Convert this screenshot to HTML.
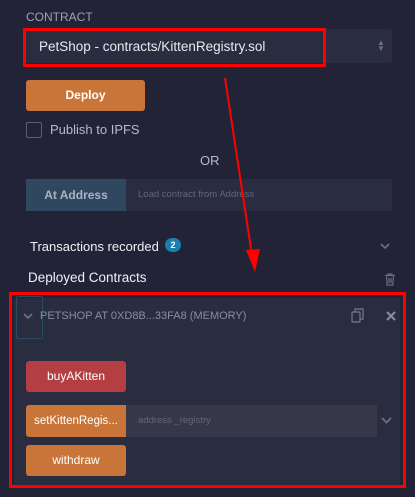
<!DOCTYPE html>
<html><head><style>
*{box-sizing:border-box;margin:0;padding:0}
body{width:415px;height:497px;background:#222336;font-family:"Liberation Sans",sans-serif;position:relative;overflow:hidden;color:#c9cbd8}
.a{position:absolute}
</style></head><body>
<div class="a" style="left:26px;top:10px;font-size:12px;color:#9fa2b4">CONTRACT</div>
<div class="a" style="left:26px;top:29px;width:366px;height:34px;background:#2a2c3f;border-radius:3px"></div>
<div class="a" style="left:39px;top:39px;font-size:13.5px;color:#e8e9f0">PetShop - contracts/KittenRegistry.sol</div>
<div class="a" style="left:377px;top:40px;font-size:8px;color:#6c6f85;line-height:6px">▲<br>▼</div>
<div class="a" style="left:23px;top:28px;width:303px;height:39px;border:3px solid #f00"></div>
<div class="a" style="left:26px;top:80px;width:119px;height:31px;background:#c97539;border-radius:3px;color:#fff;font-size:12px;font-weight:bold;text-align:center;line-height:31px">Deploy</div>
<div class="a" style="left:26px;top:122px;width:16px;height:16px;border:1px solid #5a5d73;border-radius:2px"></div>
<div class="a" style="left:50px;top:122px;font-size:13px;color:#b8bacb">Publish to IPFS</div>
<div class="a" style="left:200px;top:153px;font-size:13px;color:#b8bacb">OR</div>
<div class="a" style="left:26px;top:179px;width:366px;height:32px;background:#2a2c3f"></div>
<div class="a" style="left:26px;top:179px;width:100px;height:32px;background:#2f475f;color:#a9b3c3;font-size:12px;font-weight:bold;text-align:center;line-height:32px">At Address</div>
<div class="a" style="left:138px;top:189px;font-size:9.5px;color:#646779">Load contract from Address</div>
<div class="a" style="left:30px;top:239px;font-size:13px;color:#f0f0f5">Transactions recorded</div>
<div class="a" style="left:165px;top:238px;width:16px;height:14px;border-radius:7px;background:#1a7fae;color:#fff;font-size:9px;font-weight:bold;text-align:center;line-height:14px">2</div>
<svg class="a" style="left:380px;top:242px" width="10" height="8"><path d="M1 2l4 4 4-4" stroke="#6c6f85" stroke-width="1.6" fill="none"/></svg>
<div class="a" style="left:28px;top:270px;font-size:13.5px;color:#f0f0f5">Deployed Contracts</div>
<svg class="a" style="left:384px;top:273px" width="12" height="13"><path d="M1 2.5h10M4 2.5V1h4v1.5M2.5 3.5l.7 8.5h5.6l.7-8.5M5 5v5M7 5v5" stroke="#6c6f85" stroke-width="1.2" fill="none"/></svg>
<div class="a" style="left:14px;top:298px;width:386px;height:188px;background:#2a2c3f"></div>
<div class="a" style="left:16px;top:296px;width:27px;height:43px;border:1px solid #2c4a60;border-radius:2px"></div>
<svg class="a" style="left:23px;top:312px" width="10" height="8"><path d="M1 2l4 4 4-4" stroke="#6c6f85" stroke-width="1.8" fill="none"/></svg>
<div class="a" style="left:40px;top:310px;font-size:11px;color:#8a8da3">PETSHOP AT 0XD8B...33FA8 (MEMORY)</div>
<svg class="a" style="left:351px;top:308px" width="14" height="15"><rect x="1" y="4" width="8" height="10" rx="1" stroke="#6c6f85" stroke-width="1.4" fill="none"/><path d="M4 4V1h8v10H9" stroke="#6c6f85" stroke-width="1.4" fill="none"/></svg>
<svg class="a" style="left:386px;top:311px" width="10" height="10"><path d="M1 1l8 8M9 1l-8 8" stroke="#8a8da3" stroke-width="2"/></svg>
<div class="a" style="left:26px;top:361px;width:100px;height:31px;background:#b43f43;border-radius:3px;color:#fff;font-size:12px;text-align:center;line-height:31px">buyAKitten</div>
<div class="a" style="left:126px;top:405px;width:251px;height:32px;background:#363849"></div>
<div class="a" style="left:26px;top:405px;width:100px;height:32px;background:#c97539;border-radius:3px 0 0 3px;color:#fff;font-size:11.5px;text-align:center;line-height:32px">setKittenRegis...</div>
<div class="a" style="left:138px;top:415px;font-size:9.5px;color:#646779">address _registry</div>
<svg class="a" style="left:381px;top:416px" width="11" height="8"><path d="M1 2l4.5 4.5L10 2" stroke="#6c6f85" stroke-width="1.8" fill="none"/></svg>
<div class="a" style="left:26px;top:445px;width:100px;height:31px;background:#c97539;border-radius:3px;color:#fff;font-size:12px;text-align:center;line-height:31px">withdraw</div>
<div class="a" style="left:9px;top:292px;width:397px;height:196px;border:3px solid #f00"></div>
<svg class="a" style="left:0;top:0" width="415" height="497"><path d="M225 78L253 262" stroke="#f00" stroke-width="2"/><path d="M246 250l9 22 5-23z" fill="#f00"/></svg>
</body></html>
